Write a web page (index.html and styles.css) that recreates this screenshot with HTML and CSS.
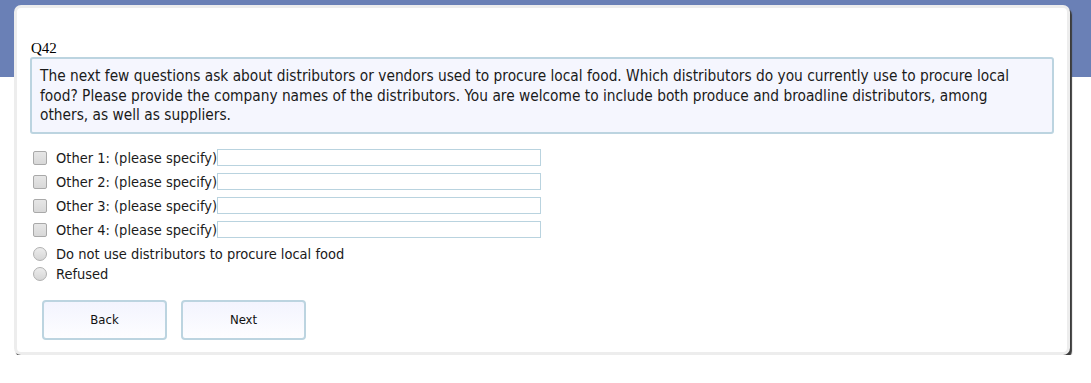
FILE: index.html
```html
<!DOCTYPE html>
<html>
<head>
<meta charset="utf-8">
<link rel="stylesheet" href="styles.css">
</head>
<body>
<div class="band"></div>
<div class="page">
  <div class="card">
    <div class="qid">Q42</div>
    <div class="qtext">The next few questions ask about distributors or vendors used to procure local food. Which distributors do you currently use to procure local food? Please provide the company names of the distributors. You are welcome to include both produce and broadline distributors, among others, as well as suppliers.</div>
    <div class="options">
      <label class="opt chk"><span class="box"></span><span class="lbl">Other 1: (please specify)</span><span class="field"></span></label>
      <label class="opt chk"><span class="box"></span><span class="lbl">Other 2: (please specify)</span><span class="field"></span></label>
      <label class="opt chk"><span class="box"></span><span class="lbl">Other 3: (please specify)</span><span class="field"></span></label>
      <label class="opt chk"><span class="box"></span><span class="lbl">Other 4: (please specify)</span><span class="field"></span></label>
      <label class="opt rad"><span class="circle"></span><span class="lbl">Do not use distributors to procure local food</span></label>
      <label class="opt rad"><span class="circle"></span><span class="lbl">Refused</span></label>
    </div>
    <div class="buttons">
      <button class="btn">Back</button>
      <button class="btn">Next</button>
    </div>
  </div>
</div>
</body>
</html>
```

FILE: styles.css
```css
html, body {
  margin: 0;
  padding: 0;
  background: #ffffff;
}
body {
  font-family: "DejaVu Sans Condensed", "DejaVu Sans", sans-serif;
  color: #000;
}
.band {
  height: 77px;
  background: #6a80b6;
}
.page {
  margin-top: -72px;
  padding-left: 14px;
  width: 1056px;
}
.card {
  background: #ffffff;
  border: 3px solid #ededed;
  border-radius: 7px;
  box-shadow: 2px 3px 1px #3c3c3c;
  height: 350px;
  box-sizing: border-box;
  padding: 32px 13px 0 13px;
}
.qid {
  font-family: "Liberation Serif", serif;
  font-size: 15px;
  line-height: 17px;
  margin-left: 1px;
}
.qtext {
  background: #f5f6fe;
  border: 2px solid #bcd4e0;
  border-radius: 3px;
  padding: 8px 16px 6px 8px;
  font-size: 15.3px;
  line-height: 19.5px;
  color: #1a1a1a;
}
.options {
  margin-top: 12px;
  display: flex;
  flex-direction: column;
}
.opt {
  display: flex;
  align-items: center;
  font-size: 14.5px;
  color: #1a1a1a;
}
.chk {
  height: 24px;
}
.rad {
  height: 20px;
}
.chk + .rad {
  margin-top: 2px;
}
.box {
  width: 12px;
  height: 12px;
  margin-left: 3px;
  margin-right: 9px;
  border: 1px solid #a9a9a9;
  border-radius: 2px;
  background: linear-gradient(#e6e6e6, #d8d8d8);
}
.circle {
  width: 12px;
  height: 12px;
  margin-left: 3px;
  margin-right: 9px;
  border: 1px solid #b0b0b0;
  border-radius: 50%;
  background: linear-gradient(#ececec, #d6d6d6);
}
.field {
  width: 322px;
  height: 15px;
  border: 1px solid #b9d3df;
  background: #fff;
}
.buttons {
  display: flex;
  gap: 14px;
  margin-top: 16px;
  padding-left: 12px;
}
.btn {
  width: 125px;
  height: 40px;
  border: 2px solid #bcd4e0;
  border-radius: 4px;
  background: linear-gradient(#f3f4fe, #fdfdff);
  font-family: "DejaVu Sans Condensed", "DejaVu Sans", sans-serif;
  font-size: 13px;
  color: #111;
  padding: 0;
}
```
